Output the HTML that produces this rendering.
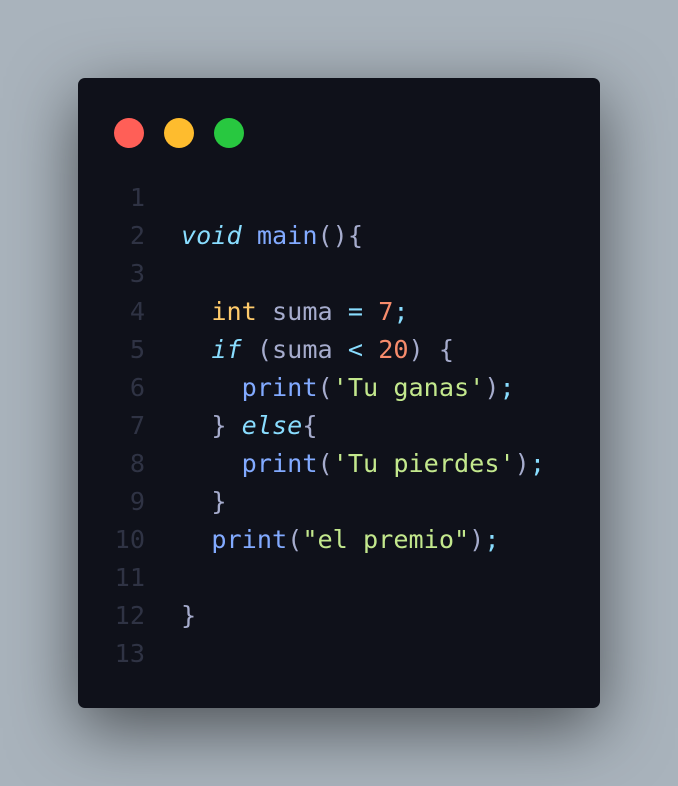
<!DOCTYPE html>
<html><head><style>
html,body{margin:0;padding:0}
body{width:678px;height:786px;background:#a9b3bc;position:relative;overflow:hidden;font-family:"DejaVu Sans Mono","Liberation Mono",monospace}
.win{position:absolute;left:78px;top:78px;width:522px;height:630px;background:#0f111a;border-radius:7px;box-shadow:0 20px 68px rgba(0,0,0,0.55)}
.dot{position:absolute;top:40px;width:30px;height:30px;border-radius:50%}
.code{position:absolute;left:0;top:101px;font-size:25.2px;line-height:38px;white-space:pre;color:#a6accd}
.ln{position:absolute;left:20px;width:47px;text-align:right;color:#2f3344}
.tx{position:absolute;left:103px}
.k{color:#89ddff;font-style:italic}.f{color:#82aaff}.t{color:#ffcb6b}.n{color:#f78c6c}.s{color:#c3e88d}.o{color:#89ddff}
</style></head><body>
<div class="win">
<div class="dot" style="left:36px;background:#ff5f57"></div>
<div class="dot" style="left:86px;background:#febc2e"></div>
<div class="dot" style="left:136px;background:#28c840"></div>
<div class="code"><div class="ln">1
2
3
4
5
6
7
8
9
10
11
12
13</div><div class="tx">
<span class="k">void</span> <span class="f">main</span>(){

  <span class="t">int</span> suma <span class="o">=</span> <span class="n">7</span><span class="o">;</span>
  <span class="k">if</span> (suma <span class="o">&lt;</span> <span class="n">20</span>) {
    <span class="f">print</span>(<span class="s">'Tu ganas'</span>)<span class="o">;</span>
  } <span class="k">else</span>{
    <span class="f">print</span>(<span class="s">'Tu pierdes'</span>)<span class="o">;</span>
  }
  <span class="f">print</span>(<span class="s">"el premio"</span>)<span class="o">;</span>

}</div></div>
</div>
</body></html>
